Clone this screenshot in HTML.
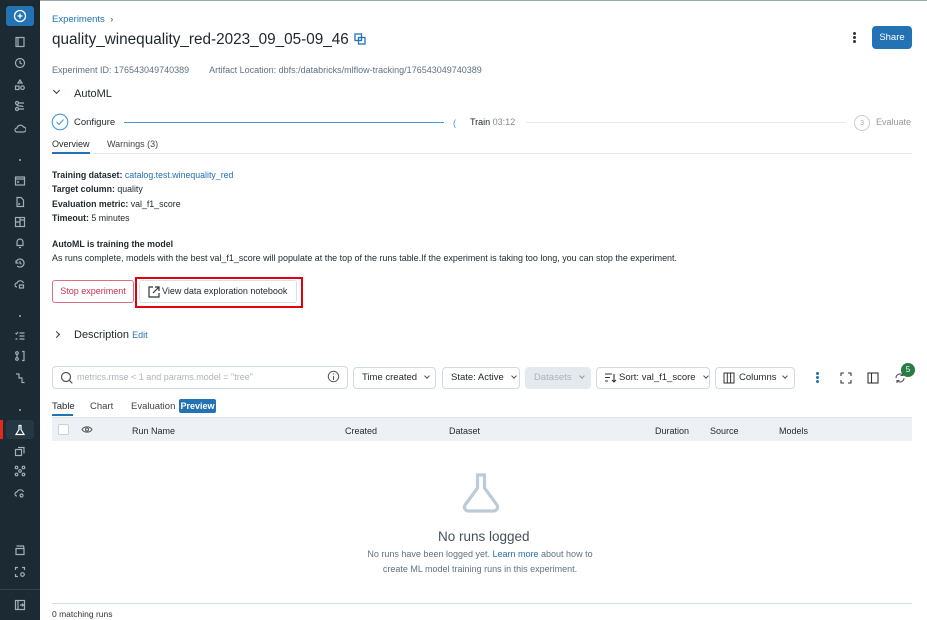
<!DOCTYPE html>
<html><head><meta charset="utf-8"><style>
*{box-sizing:border-box;margin:0;padding:0}
body{width:927px;height:620px;overflow:hidden;font-family:"Liberation Sans",sans-serif;font-size:9.5px;color:#1f272d;background:#fff;position:relative}
.a{position:absolute;white-space:nowrap}
#sb{position:absolute;left:0;top:0;width:40px;height:620px;background:#1b2a33}
.ic{position:absolute;left:14px;width:12px;height:12px}
.ic svg{width:12px;height:12px;stroke:#9fb0ba;fill:none;stroke-width:1.2}
.dot{position:absolute;left:19px;width:2px;height:2px;border-radius:1px;background:#9fb0ba}
.btn{position:absolute;border:1px solid #d1d9e1;border-radius:4px;height:22px;top:367px;font-size:9.5px;line-height:20px;padding-left:8px;color:#1f272d}
.chev{display:inline-block;width:4px;height:4px;border-right:1px solid #555;border-bottom:1px solid #555;transform:rotate(45deg);margin-left:8px;position:relative;top:-2px}
.blue{color:#2272b4}
.th{position:absolute;top:426px;font-size:9px;color:#1f272d}
</style></head><body>
<div style="position:absolute;left:0;top:0;width:927px;height:1px;background:#9aa"></div>
<div id="sb">
 <div style="position:absolute;left:6px;top:6px;width:28px;height:20px;background:#2272b4;border-radius:3px"><svg width="28" height="20"><circle cx="14" cy="10" r="5.5" stroke="#fff" fill="none" stroke-width="1.3"/><path d="M14 7.5v5M11.5 10h5" stroke="#fff" stroke-width="1.3"/></svg></div>
 <div class="ic" style="top:36px"><svg viewBox="0 0 12 12"><rect x="2" y="1.5" width="8" height="9"/><path d="M4 1.5v9"/></svg></div>
 <div class="ic" style="top:57px"><svg viewBox="0 0 12 12"><circle cx="6" cy="6" r="4.5"/><path d="M6 3.5V6l2 1"/></svg></div>
 <div class="ic" style="top:79px"><svg viewBox="0 0 12 12"><path d="M6 1l2 3H4z"/><rect x="1.5" y="7" width="3.5" height="3.5"/><circle cx="8.5" cy="8.7" r="1.8"/></svg></div>
 <div class="ic" style="top:100px"><svg viewBox="0 0 12 12"><circle cx="3" cy="3" r="1.5"/><circle cx="3" cy="9" r="1.5"/><path d="M5 3h5M5 9h5M3 5c0 2 6 0 6 2"/></svg></div>
 <div class="ic" style="top:122px"><svg viewBox="0 0 12 12"><path d="M3 10h6.5a2.5 2.5 0 0 0 0-5A3.5 3.5 0 0 0 3 6a2 2 0 0 0 0 4z"/></svg></div>
 <div class="dot" style="top:159px"></div>
 <div class="ic" style="top:175px"><svg viewBox="0 0 12 12"><rect x="1.5" y="2" width="9" height="8"/><path d="M1.5 4h9M3.5 6l1 1-1 1"/></svg></div>
 <div class="ic" style="top:196px"><svg viewBox="0 0 12 12"><path d="M3 1.5h4l2.5 2.5v6.5H3z"/><path d="M4.5 7l1 1-1 1"/></svg></div>
 <div class="ic" style="top:216px"><svg viewBox="0 0 12 12"><rect x="1.5" y="1.5" width="9" height="9"/><path d="M6 1.5v9M1.5 6h4.5M6 4h4.5"/></svg></div>
 <div class="ic" style="top:237px"><svg viewBox="0 0 12 12"><path d="M3 8.5V5a3 3 0 0 1 6 0v3.5H2.5h7M5 10.5h2"/></svg></div>
 <div class="ic" style="top:257px"><svg viewBox="0 0 12 12"><path d="M2 6a4 4 0 1 1 1.2 2.9M2 3.5V6h2.5M6 4v2.2l1.5 1"/></svg></div>
 <div class="ic" style="top:278px"><svg viewBox="0 0 12 12"><path d="M3 9a2 2 0 0 1 0-4 3.5 3.5 0 0 1 6.5 0"/><rect x="5.5" y="7" width="4" height="3"/></svg></div>
 <div class="dot" style="top:315px"></div>
 <div class="ic" style="top:330px"><svg viewBox="0 0 12 12"><path d="M5.5 3h5M5.5 6h5M5.5 9h5M1.5 3l1 1 1.5-2M1.5 9h2"/></svg></div>
 <div class="ic" style="top:350px"><svg viewBox="0 0 12 12"><circle cx="3" cy="3" r="1.3"/><circle cx="3" cy="9" r="1.3"/><path d="M8 1.5h2v9H8M3 4.5v3"/></svg></div>
 <div class="ic" style="top:372px"><svg viewBox="0 0 12 12"><path d="M2 2h3v4h3v4.5h2.5"/></svg></div>
 <div class="dot" style="top:409px"></div>
 <div style="position:absolute;left:0;top:420px;width:3px;height:19px;background:#e02a1b"></div>
 <div style="position:absolute;left:6px;top:420px;width:28px;height:19px;background:#243742;border-radius:3px"></div>
 <div class="ic" style="top:424px"><svg viewBox="0 0 12 12" style="stroke:#fff"><path d="M4.5 1.5h3M5 1.5v4L2 10.5h8L7 5.5v-4"/></svg></div>
 <div class="ic" style="top:445px"><svg viewBox="0 0 12 12"><rect x="1.5" y="4.5" width="6" height="6"/><path d="M4 2.5h6v6"/></svg></div>
 <div class="ic" style="top:465px"><svg viewBox="0 0 12 12"><circle cx="2.5" cy="2.5" r="1.3"/><circle cx="9.5" cy="2.5" r="1.3"/><circle cx="6" cy="6" r="1.3"/><circle cx="2.5" cy="9.5" r="1.3"/><circle cx="9.5" cy="9.5" r="1.3"/></svg></div>
 <div class="ic" style="top:487px"><svg viewBox="0 0 12 12"><path d="M3 9a2 2 0 0 1 0-4 3.5 3.5 0 0 1 6.5 0"/><circle cx="7.5" cy="8.5" r="1.5"/></svg></div>
 <div class="ic" style="top:544px"><svg viewBox="0 0 12 12"><path d="M2 4.5h8v6H2zM2.5 2h7l.5 2.5"/></svg></div>
 <div class="ic" style="top:566px"><svg viewBox="0 0 12 12"><path d="M1.5 4V1.5H4M8 1.5h2.5V4M1.5 8v2.5H4"/><circle cx="8.5" cy="8.5" r="1.8"/></svg></div>
 <div style="position:absolute;left:0;top:589px;width:40px;height:1px;background:#33454f"></div>
 <div class="ic" style="top:599px"><svg viewBox="0 0 12 12"><rect x="1.5" y="1.5" width="9" height="9"/><path d="M4 1.5v9M6 6h3.5M8 4.5L9.5 6 8 7.5"/></svg></div>
</div>

<div class="a blue" style="left:52px;top:14px;font-size:9.5px">Experiments&nbsp;&nbsp;<span style="color:#555">›</span></div>
<div class="a" style="left:52px;top:31px;font-size:15.3px">quality_winequality_red-2023_09_05-09_46</div>
<svg class="a" style="left:354px;top:33px" width="12" height="12"><rect x="1" y="1" width="6.5" height="6.5" fill="none" stroke="#2272b4" stroke-width="1.3"/><rect x="4.5" y="4.5" width="6.5" height="6.5" fill="none" stroke="#2272b4" stroke-width="1.3"/></svg>
<div class="a" style="left:853px;top:32px;width:3px"><div style="width:2.5px;height:2.5px;background:#333;border-radius:2px;margin-bottom:1.5px"></div><div style="width:2.5px;height:2.5px;background:#333;border-radius:2px;margin-bottom:1.5px"></div><div style="width:2.5px;height:2.5px;background:#333;border-radius:2px"></div></div>
<div class="a" style="left:872px;top:26px;width:40px;height:23px;background:#2272b4;border-radius:4px;color:#fff;text-align:center;line-height:23px;font-size:9.5px">Share</div>
<div class="a" style="left:52px;top:65px;color:#5f7281;font-size:9px">Experiment ID: 176543049740389&nbsp;&nbsp;&nbsp;&nbsp;&nbsp;&nbsp;&nbsp;&nbsp;Artifact Location: dbfs:/databricks/mlflow-tracking/176543049740389</div>
<div class="a" style="left:54px;top:88px;width:5px;height:5px;border-right:1.4px solid #333;border-bottom:1.4px solid #333;transform:rotate(45deg)"></div>
<div class="a" style="left:74px;top:88px;font-size:11px">AutoML</div>
<svg class="a" style="left:51px;top:113px" width="18" height="18"><circle cx="9" cy="9" r="7.8" fill="none" stroke="#4299e0" stroke-width="1.1"/><path d="M5.5 9l2.5 2.5 4.5-5" fill="none" stroke="#4299e0" stroke-width="1.1"/></svg>
<div class="a" style="left:74px;top:117px;font-size:9.5px">Configure</div>
<div class="a" style="left:124px;top:122px;width:320px;height:1px;background:#4299e0"></div>
<div class="a" style="left:453px;top:118px;color:#4299e0;font-size:9px">(</div>
<div class="a" style="left:470px;top:117px;font-size:9px">Train <span style="color:#888">03:12</span></div>
<div class="a" style="left:526px;top:122px;width:320px;height:1px;background:#e6ebef"></div>
<div class="a" style="left:854px;top:115px;width:16px;height:16px;border:1px solid #ccc;border-radius:8px;color:#aaa;font-size:7.5px;text-align:center;line-height:14px">3</div>
<div class="a" style="left:876px;top:117px;color:#999;font-size:9px">Evaluate</div>
<div class="a" style="left:52px;top:139px;font-size:9px">Overview</div>
<div class="a" style="left:107px;top:139px;font-size:9px;color:#444">Warnings (3)</div>
<div class="a" style="left:52px;top:153px;width:860px;height:1px;background:#e6ebef"></div>
<div class="a" style="left:52px;top:152px;width:38px;height:2px;background:#2272b4"></div>

<div class="a" style="left:52px;top:168px;font-size:8.8px;line-height:14.3px"><b style="font-weight:600">Training dataset:</b> <span class="blue">catalog.test.winequality_red</span><br><b style="font-weight:600">Target column:</b> quality<br><b style="font-weight:600">Evaluation metric:</b> val_f1_score<br><b style="font-weight:600">Timeout:</b> 5 minutes</div>
<div class="a" style="left:52px;top:239px;font-size:8.8px;font-weight:bold">AutoML is training the model</div>
<div class="a" style="left:52px;top:253px;font-size:8.95px">As runs complete, models with the best val_f1_score will populate at the top of the runs table.If the experiment is taking too long, you can stop the experiment.</div>
<div class="a" style="left:52px;top:280px;width:82px;height:23px;border:1px solid #d87080;border-radius:3px;color:#c8314d;font-size:9px;line-height:21px;text-align:center">Stop experiment</div>
<div class="a" style="left:135px;top:277px;width:168px;height:31px;border:2px solid #e0000f"></div>
<div class="a" style="left:139px;top:280px;width:158px;height:23px;border:1px solid #d9e0e6;border-radius:3px;font-size:9px;line-height:21px;padding-left:22px">View data exploration notebook</div>
<svg class="a" style="left:147px;top:285px" width="14" height="14"><path d="M6 2H2v10h10V8M8 2h4v4M12 2L6 8" fill="none" stroke="#333" stroke-width="1.2"/></svg>
<div class="a" style="left:54px;top:332px;width:5px;height:5px;border-right:1.4px solid #333;border-bottom:1.4px solid #333;transform:rotate(-45deg)"></div>
<div class="a" style="left:74px;top:329px;font-size:11px">Description <span class="blue" style="font-size:9px">Edit</span></div>

<div class="a" style="left:52px;top:366px;width:296px;height:23px;border:1px solid #d1d9e1;border-radius:4px"></div>
<svg class="a" style="left:60px;top:371px" width="13" height="13"><circle cx="6" cy="6" r="4.5" fill="none" stroke="#555" stroke-width="1.2"/><path d="M9.3 9.3l3 3" stroke="#555" stroke-width="1.2"/></svg>
<div class="a" style="left:77px;top:372px;color:#aab4bd;font-size:9px">metrics.rmse &lt; 1 and params.model = "tree"</div>
<svg class="a" style="left:327px;top:370px" width="13" height="13"><circle cx="6.5" cy="6.5" r="5.2" fill="none" stroke="#555" stroke-width="1"/><path d="M6.5 6v4M6.5 3.5v1" stroke="#555" stroke-width="1.1"/></svg>
<div class="btn" style="left:353px;width:83px">Time created<span class="chev"></span></div>
<div class="btn" style="left:442px;width:78px">State: Active<span class="chev"></span></div>
<div class="btn" style="left:525px;width:66px;background:#e4e9ee;color:#a7b3bd;border-color:#e4e9ee">Datasets<span class="chev" style="border-color:#999"></span></div>
<div class="btn" style="left:596px;width:114px;padding-left:22px">Sort: val_f1_score<span class="chev"></span></div>
<svg class="a" style="left:604px;top:372px" width="13" height="12"><path d="M1 2h7M1 5.5h5M1 9h3M10 2v8M8 8l2 2 2-2" fill="none" stroke="#333" stroke-width="1.1"/></svg>
<div class="btn" style="left:715px;width:80px;padding-left:23px">Columns<span class="chev" style="margin-left:6px"></span></div>
<svg class="a" style="left:723px;top:372px" width="12" height="12"><rect x="1" y="1" width="10" height="10" fill="none" stroke="#333" stroke-width="1"/><path d="M4.3 1v10M7.6 1v10" stroke="#333"/></svg>
<div class="a" style="left:816px;top:372px"><div style="width:2.5px;height:2.5px;background:#2272b4;border-radius:2px;margin-bottom:1.5px"></div><div style="width:2.5px;height:2.5px;background:#2272b4;border-radius:2px;margin-bottom:1.5px"></div><div style="width:2.5px;height:2.5px;background:#2272b4;border-radius:2px"></div></div>
<svg class="a" style="left:840px;top:372px" width="12" height="12"><path d="M1 4V1h3M8 1h3v3M11 8v3H8M4 11H1V8" fill="none" stroke="#333" stroke-width="1.1"/></svg>
<svg class="a" style="left:867px;top:372px" width="12" height="12"><rect x="1" y="1" width="10" height="10" fill="none" stroke="#333" stroke-width="1.1"/><path d="M4.5 1v10" stroke="#333" stroke-width="1.1"/></svg>
<svg class="a" style="left:894px;top:372px" width="12" height="12"><path d="M10 6a4 4 0 0 1-7 2.6M2 6a4 4 0 0 1 7-2.6M9 1v2.5H6.5M3 11V8.5h2.5" fill="none" stroke="#555" stroke-width="1.1"/></svg>
<div class="a" style="left:901px;top:363px;width:14px;height:14px;border-radius:7px;background:#277c43;color:#fff;font-size:8px;text-align:center;line-height:14px">5</div>

<div class="a" style="left:52px;top:401px;font-size:9.5px">Table</div>
<div class="a" style="left:52px;top:414px;width:21px;height:2px;background:#2272b4"></div>
<div class="a" style="left:90px;top:401px;font-size:9.5px;color:#444">Chart</div>
<div class="a" style="left:131px;top:401px;font-size:9.5px;color:#444">Evaluation</div>
<div class="a" style="left:179px;top:399px;width:37px;height:14px;background:#2272b4;border-radius:2px;color:#fff;font-weight:bold;font-size:9px;text-align:center;line-height:14px">Preview</div>
<div class="a" style="left:52px;top:417px;width:860px;height:24px;background:#edf1f5;border-top:1px solid #dde4ea"></div>
<div class="a" style="left:58px;top:424px;width:11px;height:11px;border:1px solid #c8d1d9;border-radius:2px;background:#fff"></div>
<svg class="a" style="left:81px;top:425px" width="12" height="9"><path d="M1 4.5C3 1 9 1 11 4.5 9 8 3 8 1 4.5z" fill="none" stroke="#555"/><circle cx="6" cy="4.5" r="1.5" fill="none" stroke="#555"/></svg>
<div class="th" style="left:132px">Run Name</div>
<div class="th" style="left:345px">Created</div>
<div class="th" style="left:449px">Dataset</div>
<div class="th" style="left:655px">Duration</div>
<div class="th" style="left:710px">Source</div>
<div class="th" style="left:779px">Models</div>

<svg class="a" style="left:460px;top:473px" width="42" height="42"><path d="M16 2h10M17.5 2v13L5 32a4 4 0 0 0 3 6h26a4 4 0 0 0 3-6L24.5 15V2" fill="none" stroke="#bccbd8" stroke-width="3.2"/></svg>
<div class="a" style="left:438px;top:529px;font-size:13.5px;color:#44515c">No runs logged</div>
<div class="a" style="left:355px;top:547px;width:250px;text-align:center;font-size:9px;color:#5f7281;line-height:14.5px;white-space:normal">No runs have been logged yet. <span class="blue">Learn more</span> about how to create ML model training runs in this experiment.</div>
<div class="a" style="left:52px;top:603px;width:860px;height:1px;background:#d5dee6"></div>
<div class="a" style="left:52px;top:609px;font-size:8.5px;color:#333">0 matching runs</div>
</body></html>
